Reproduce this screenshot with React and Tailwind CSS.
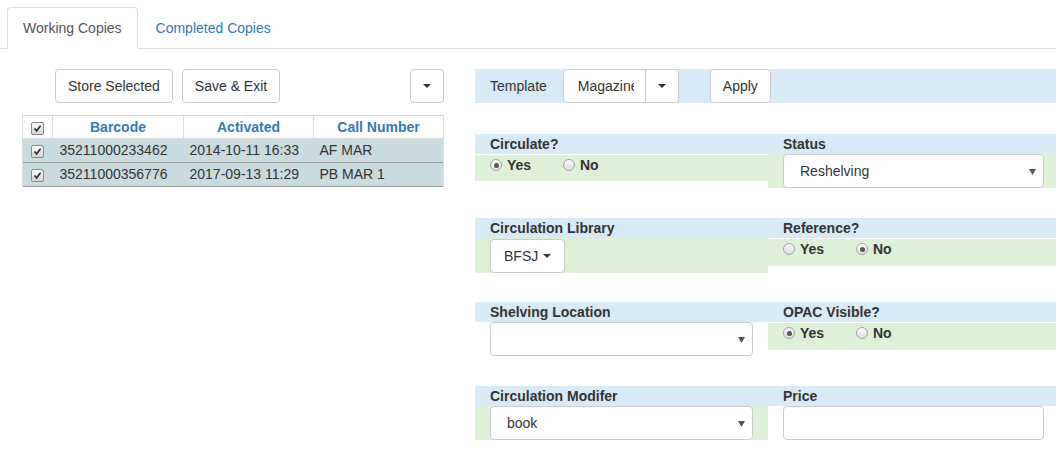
import React from 'react';

const Check = () => (
  <span className="inline-flex items-center justify-center w-[13px] h-[13px] border border-[#8a8a8a] rounded-[2px] bg-gradient-to-b from-[#fafafa] to-[#d6d6d6] align-middle">
    <svg width="9" height="9" viewBox="0 0 9 9">
      <path d="M1.5 4.5 L3.6 6.8 L7.6 1.8" fill="none" stroke="#333" strokeWidth="1.8" />
    </svg>
  </span>
);

const Radio = ({ on, label }) => (
  <span className="flex items-center font-bold">
    <span className="inline-flex items-center justify-center w-[12px] h-[12px] rounded-full border border-[#a3a3a3] bg-gradient-to-b from-[#fdfdfd] to-[#dedede] mr-[5px]">
      {on && <span className="w-[5px] h-[5px] rounded-full bg-[#555]" />}
    </span>
    {label}
  </span>
);

const YesNo = ({ yes }) => (
  <div className="flex items-center h-[20px] mt-[1px] pl-[15px]">
    <div className="w-[73px] flex items-center"><Radio on={yes} label="Yes" /></div>
    <div className="flex items-center"><Radio on={!yes} label="No" /></div>
  </div>
);

const Caret = () => (
  <span className="inline-block w-0 h-0 border-t-[4px] border-t-[#333] border-x-[4px] border-x-transparent align-middle" />
);

const Select = ({ value, className = '' }) => (
  <div className={`relative h-[34px] border border-[#ccc] rounded-[4px] bg-white flex items-center pl-[16px] ${className}`}>
    <span>{value}</span>
    <svg className="absolute right-[7px] top-[14px]" width="7" height="6" viewBox="0 0 7 6">
      <path d="M0 0 H7 L3.5 6 Z" fill="#555" />
    </svg>
  </div>
);

const Btn = ({ children, className = '' }) => (
  <button className={`h-[34px] px-[12px] border border-[#ccc] rounded-[4px] bg-white text-[#333] leading-[20px] ${className}`}>
    {children}
  </button>
);

const rows = [
  ['35211000233462', '2014-10-11 16:33', 'AF MAR'],
  ['35211000356776', '2017-09-13 11:29', 'PB MAR 1'],
];

export default function App() {
  return (
    <div className="w-[1056px] h-[461px] overflow-hidden bg-white text-[14px] text-[#333] font-['Liberation_Sans',Arial,sans-serif]">
      {/* tabs */}
      <div className="flex pt-[7px] pl-[7px] border-b border-[#ddd]">
        <div className="-mb-px px-[15px] py-[10px] leading-[20px] border border-[#ddd] border-b-white rounded-t-[4px] bg-white text-[#555]">
          Working Copies
        </div>
        <div className="-mb-px ml-[2px] px-[15px] py-[10px] leading-[20px] border border-transparent text-[#337ab7]">
          Completed Copies
        </div>
      </div>

      <div className="flex mt-[20px]">
        {/* left */}
        <div className="w-[475px] shrink-0 pl-[22px]">
          <div className="w-[422px] flex">
            <Btn className="ml-[33px]">Store Selected</Btn>
            <Btn className="ml-[9px]">Save &amp; Exit</Btn>
            <Btn className="ml-auto w-[34px] px-0 flex items-center justify-center"><Caret /></Btn>
          </div>
          <table className="mt-[12px] w-[422px] border-collapse">
            <thead>
              <tr className="h-[23px]">
                <th className="w-[30px] border border-[#ddd] text-center leading-[20px]"><Check /></th>
                <th className="w-[131px] border border-[#ddd] text-[#337ab7] font-bold">Barcode</th>
                <th className="w-[130px] border border-[#ddd] text-[#337ab7] font-bold">Activated</th>
                <th className="border border-[#ddd] text-[#337ab7] font-bold">Call Number</th>
              </tr>
            </thead>
            <tbody>
              {rows.map((r) => (
                <tr key={r[0]} className="h-[24px] bg-[#c9dbde] border-b border-[#9a9a9a]">
                  <td className="text-center border-l border-[#ddd]"><Check /></td>
                  <td className="pl-[7px]">{r[0]}</td>
                  <td className="pl-[6px]">{r[1]}</td>
                  <td className="pl-[6px] border-r border-[#ddd]">{r[2]}</td>
                </tr>
              ))}
            </tbody>
          </table>
        </div>

        {/* right */}
        <div className="flex-1">
          <div className="h-[34px] bg-[#d9eaf7] flex items-center pl-[15px]">
            <span>Template</span>
            <div className="ml-[16px] flex h-[34px] border border-[#ccc] rounded-[4px] bg-white">
              <div className="w-[81px] overflow-hidden whitespace-nowrap pl-[14px] flex items-center">
                <span className="inline-block w-[56px] overflow-hidden">Magazine</span>
              </div>
              <div className="w-[33px] border-l border-[#ccc] flex items-center justify-center"><Caret /></div>
            </div>
            <Btn className="ml-[31px]">Apply</Btn>
          </div>

          {/* row 1 */}
          <div className="mt-[31px] grid grid-cols-[293px_1fr]">
            <div>
              <div className="h-[20px] leading-[20px] bg-[#d9eaf7] pl-[15px] font-bold">Circulate?</div>
              <div className="h-[26px] bg-[#dff0d8]"><YesNo yes /></div>
            </div>
            <div>
              <div className="h-[20px] leading-[20px] bg-[#d9eaf7] pl-[15px] font-bold">Status</div>
              <div className="h-[34px] bg-[#dff0d8] pl-[15px] pr-[12px]"><Select value="Reshelving" /></div>
            </div>
          </div>

          {/* row 2 */}
          <div className="mt-[30px] grid grid-cols-[293px_1fr]">
            <div>
              <div className="h-[20px] leading-[20px] bg-[#d9eaf7] pl-[15px] font-bold">Circulation Library</div>
              <div className="h-[35px] bg-[#dff0d8] pl-[15px] pt-[1px]">
                <Btn className="flex items-center gap-[5px] pl-[13px] pr-[13px]">BFSJ <Caret /></Btn>
              </div>
            </div>
            <div>
              <div className="h-[20px] leading-[20px] bg-[#d9eaf7] pl-[15px] font-bold">Reference?</div>
              <div className="h-[27px] bg-[#dff0d8]"><YesNo yes={false} /></div>
            </div>
          </div>

          {/* row 3 */}
          <div className="mt-[29px] grid grid-cols-[293px_1fr]">
            <div>
              <div className="h-[20px] leading-[20px] bg-[#d9eaf7] pl-[15px] font-bold">Shelving Location</div>
              <div className="h-[34px] pl-[15px] pr-[15px]"><Select value="" /></div>
            </div>
            <div>
              <div className="h-[20px] leading-[20px] bg-[#d9eaf7] pl-[15px] font-bold">OPAC Visible?</div>
              <div className="h-[27px] bg-[#dff0d8]"><YesNo yes /></div>
            </div>
          </div>

          {/* row 4 */}
          <div className="mt-[30px] grid grid-cols-[293px_1fr]">
            <div>
              <div className="h-[20px] leading-[20px] bg-[#d9eaf7] pl-[15px] font-bold">Circulation Modifer</div>
              <div className="h-[34px] bg-[#dff0d8] pl-[15px] pr-[15px]"><Select value="book" /></div>
            </div>
            <div>
              <div className="h-[20px] leading-[20px] bg-[#d9eaf7] pl-[15px] font-bold">Price</div>
              <div className="h-[34px] pl-[15px] pr-[12px]">
                <div className="h-[34px] border border-[#ccc] rounded-[4px] bg-white" />
              </div>
            </div>
          </div>
        </div>
      </div>
    </div>
  );
}
